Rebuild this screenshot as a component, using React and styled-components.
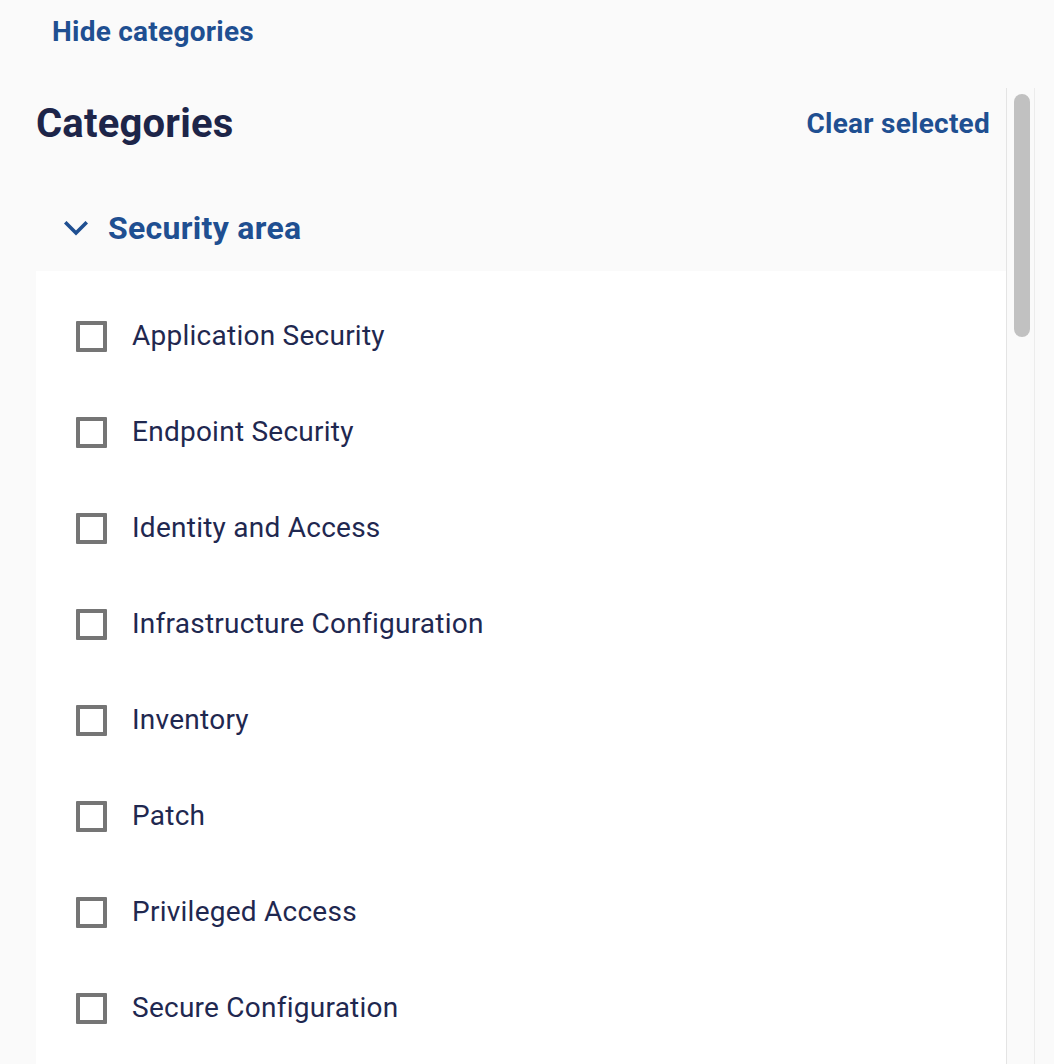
import React from "react";
import styled, { createGlobalStyle } from "styled-components";

const GlobalStyle = createGlobalStyle`
  html, body {
    margin: 0;
    padding: 0;
    background: #fafafa;
    font-family: Roboto, "Liberation Sans", Arial, sans-serif;
    overflow: hidden;
  }
  * { box-sizing: border-box; }
`;

const Page = styled.div`
  height: 100vh;
  display: flex;
  flex-direction: column;
  background: #fafafa;
  padding-right: 19px;
`;

const TopBar = styled.div`
  height: 88px;
  flex: none;
  padding: 18px 0 0 52px;
`;

const LinkButton = styled.button`
  border: none;
  background: none;
  padding: 0;
  margin: 0;
  font-family: Roboto, "Liberation Sans", Arial, sans-serif;
  font-weight: 700;
  font-size: 28px;
  line-height: 28px;
  letter-spacing: 0.25px;
  color: #1f4f91;
  cursor: pointer;
`;

const Panel = styled.div`
  flex: 1;
  min-height: 0;
  display: flex;
  overflow: hidden;
`;

const Content = styled.div`
  flex: 1;
  min-width: 0;
  padding-left: 36px;
  display: flex;
  flex-direction: column;
`;

const HeaderRow = styled.div`
  height: 70px;
  flex: none;
  display: flex;
  align-items: center;
  justify-content: space-between;
  padding: 2px 16px 0 0;
`;

const Title = styled.h2`
  margin: 0;
  font-size: 40px;
  line-height: 40px;
  font-weight: 700;
  letter-spacing: 0.2px;
  color: #1d2549;
`;

const SectionHeader = styled.button`
  display: flex;
  align-items: center;
  gap: 20px;
  border: none;
  background: none;
  margin: 0;
  padding: 50px 0 23px 28px;
  height: 113px;
  flex: none;
  cursor: pointer;
  text-align: left;
`;

const SectionTitle = styled.span`
  font-family: Roboto, "Liberation Sans", Arial, sans-serif;
  font-size: 32px;
  line-height: 40px;
  font-weight: 700;
  letter-spacing: 0.3px;
  color: #1f4f91;
`;

const List = styled.ul`
  list-style: none;
  margin: 0;
  padding: 17px 0 17px 40px;
  background: #ffffff;
`;

const Row = styled.li`
  height: 96px;
  display: flex;
  align-items: center;
  gap: 25px;
`;

const Box = styled.span`
  width: 31px;
  height: 31px;
  flex: none;
  border: 4px solid #757575;
  border-radius: 1px;
  background: #ffffff;
`;

const Label = styled.span`
  font-size: 28px;
  line-height: 32px;
  font-weight: 400;
  letter-spacing: 0.25px;
  color: #1f2850;
`;

const ScrollTrack = styled.div`
  width: 29px;
  flex: none;
  border-left: 1px solid #e4e4e4;
  border-right: 1px solid #ececec;
  background: #fafafa;
  padding: 6px 0 0 7px;
`;

const Thumb = styled.div`
  width: 16px;
  height: 243px;
  border-radius: 8px;
  background: #c1c1c1;
`;

const Chevron = () => (
  <svg width="24" height="15" viewBox="0 0 24 15" fill="none" aria-hidden="true">
    <path d="M2.5 2.5 L12 12 L21.5 2.5" stroke="#1f4f91" strokeWidth="3.6" strokeLinecap="square" strokeLinejoin="miter" />
  </svg>
);

const items = [
  "Application Security",
  "Endpoint Security",
  "Identity and Access",
  "Infrastructure Configuration",
  "Inventory",
  "Patch",
  "Privileged Access",
  "Secure Configuration",
];

export default function App() {
  return (
    <>
      <GlobalStyle />
      <Page>
        <TopBar>
          <LinkButton>Hide categories</LinkButton>
        </TopBar>
        <Panel>
          <Content>
            <HeaderRow>
              <Title>Categories</Title>
              <LinkButton>Clear selected</LinkButton>
            </HeaderRow>
            <SectionHeader>
              <Chevron />
              <SectionTitle>Security area</SectionTitle>
            </SectionHeader>
            <List>
              {items.map((it) => (
                <Row key={it}>
                  <Box />
                  <Label>{it}</Label>
                </Row>
              ))}
            </List>
          </Content>
          <ScrollTrack>
            <Thumb />
          </ScrollTrack>
        </Panel>
      </Page>
    </>
  );
}
